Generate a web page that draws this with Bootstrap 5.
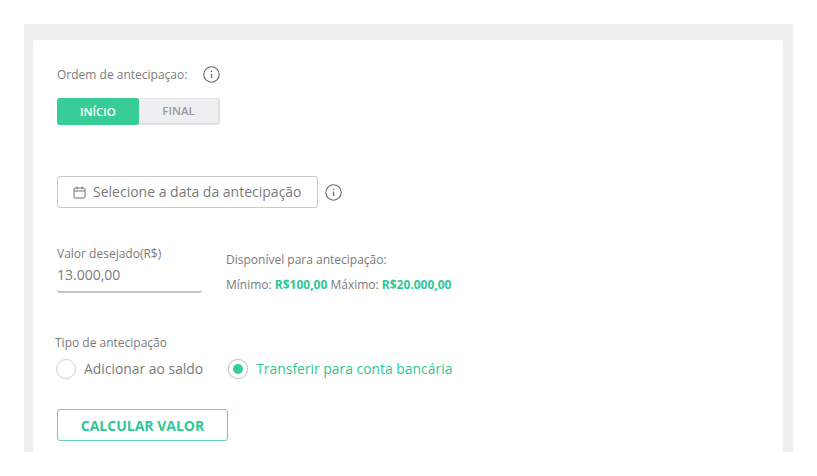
<!DOCTYPE html>
<html lang="pt-BR">
<head>
<meta charset="utf-8">
<title>Antecipação</title>
<link rel="stylesheet" href="https://cdn.jsdelivr.net/npm/bootstrap@5.3.0/dist/css/bootstrap.min.css">
<style>
html,body{background:#fff;height:476px;overflow:hidden}
body{font-family:"Open Sans","Noto Sans",sans-serif;color:#7b7b7b;padding:24px}
.outer-panel{width:769px;height:428px;background:#eee;padding:16px 10px 0 9px}
.inner-sheet{background:#fff;height:412px;border-radius:2px 2px 0 0;padding:24px 24px 0 24px}
.order-line{font-size:12px;height:21px;line-height:21px;gap:16px}
.seg-wrap{margin-top:13px;width:163px;height:27px;border-radius:3px;background:#eeeff1;border-right:2px solid #e0e1e3;border-bottom:2px solid #e0e1e3;border-top:1px solid #e6e7e9;font-size:11.5px;font-weight:600}
.seg-on{width:82px;background:#38cd97;color:#fff;border-radius:3px;margin:-1px 0 -2px}
.seg-off{flex:1;color:#9b9b9b}
.date-line{margin-top:51px;gap:7px}
.date-box{width:261px;height:32px;border:1px solid #c9c9c9;border-radius:3px;padding-left:15px;gap:7px;font-size:14px;line-height:20px}
.date-box span{margin-top:-1px}
.value-line{margin-top:37px}
.value-col{width:145px}
.value-label{font-size:12px;line-height:17px}
.value-num{font-size:14px;line-height:20px;margin-top:3px;height:28px;border-bottom:2px solid #c4c4c4;border-radius:0 0 3px 3px}
.avail-col{margin-left:24px;font-size:12px}
.avail-top{line-height:17px;margin-top:6px}
.avail-bottom{line-height:17px;margin-top:8px}
.money{color:#2fc795;font-weight:700}
.type-title{font-size:12px;line-height:17px;margin-top:41px;margin-left:-2px}
.radio-line{margin-top:8px;font-size:13.9px;gap:25px;height:21px;margin-left:-1px}
.radio-opt{gap:8px}
.radio-mark{width:20px;height:20px;border-radius:50%;border:1px solid #ccd3da;background:#fff;flex:none}
.radio-mark.is-on{border-color:#c6ccd2;box-shadow:0 0 1px #bbb}
.radio-dot{width:10px;height:10px;border-radius:50%;background:#38cd97}
.radio-text-on{color:#2fc795}
.calc-btn{margin-top:29px;width:171px;height:32px;border:1px solid #5fd6aa;border-radius:3px;background:#fff;color:#2fc795;font-size:14px;font-weight:700;padding:0}
.info-svg{display:block;flex:none}
</style>
</head>
<body>
<div class="outer-panel">
  <div class="inner-sheet">
    <div class="d-flex align-items-center order-line">
      <span>Ordem de antecipaçao:</span>
      <svg class="info-svg" width="17" height="17" viewBox="0 0 17 17" fill="none" stroke="#666"><circle cx="8.5" cy="8.5" r="7.7" stroke-width="1.1"/><path d="M8.5 7.6v4.4" stroke-width="1.2"/><path d="M8.5 4.8v1.2" stroke-width="1.3"/></svg>
    </div>
    <div class="d-flex seg-wrap">
      <div class="seg-on d-flex align-items-center justify-content-center">INÍCIO</div>
      <div class="seg-off d-flex align-items-center justify-content-center">FINAL</div>
    </div>
    <div class="d-flex align-items-center date-line">
      <div class="d-flex align-items-center date-box">
        <svg class="info-svg" width="13" height="13" viewBox="0 0 13 13" fill="none" stroke="#777" stroke-width="1"><rect x="1" y="2" width="11" height="10" rx="1"/><path d="M1 5h11M4 .5v3M9 .5v3"/></svg>
        <span>Selecione a data da antecipação</span>
      </div>
      <svg class="info-svg" width="17" height="17" viewBox="0 0 17 17" fill="none" stroke="#666"><circle cx="8.5" cy="8.5" r="7.7" stroke-width="1.1"/><path d="M8.5 7.6v4.4" stroke-width="1.2"/><path d="M8.5 4.8v1.2" stroke-width="1.3"/></svg>
    </div>
    <div class="d-flex value-line">
      <div class="value-col">
        <div class="value-label">Valor desejado(R$)</div>
        <div class="value-num">13.000,00</div>
      </div>
      <div class="avail-col">
        <div class="avail-top">Disponível para antecipação:</div>
        <div class="avail-bottom">Mínimo: <span class="money">R$100,00</span> Máximo: <span class="money">R$20.000,00</span></div>
      </div>
    </div>
    <div class="type-title">Tipo de antecipação</div>
    <div class="d-flex align-items-center radio-line">
      <div class="d-flex align-items-center radio-opt"><span class="radio-mark"></span><span>Adicionar ao saldo</span></div>
      <div class="d-flex align-items-center radio-opt"><span class="radio-mark is-on d-flex align-items-center justify-content-center"><span class="radio-dot"></span></span><span class="radio-text-on">Transferir para conta bancária</span></div>
    </div>
    <button type="button" class="btn calc-btn d-block">CALCULAR VALOR</button>
  </div>
</div>
<script src="https://cdn.jsdelivr.net/npm/bootstrap@5.3.0/dist/js/bootstrap.bundle.min.js"></script>
</body>
</html>
